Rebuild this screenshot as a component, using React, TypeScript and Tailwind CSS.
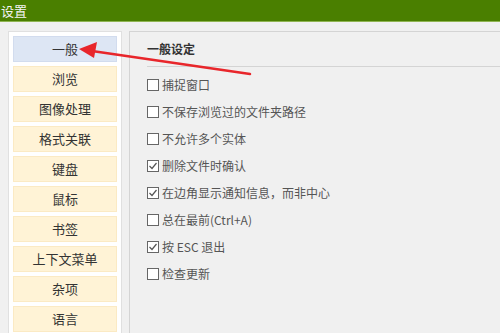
const navItems = [
  "一般",
  "浏览",
  "图像处理",
  "格式关联",
  "键盘",
  "鼠标",
  "书签",
  "上下文菜单",
  "杂项",
  "语言",
];

const options = [
  { label: "捕捉窗口", checked: false },
  { label: "不保存浏览过的文件夹路径", checked: false },
  { label: "不允许多个实体", checked: false },
  { label: "删除文件时确认", checked: true },
  { label: "在边角显示通知信息，而非中心", checked: true },
  { label: "总在最前(Ctrl+A)", checked: false },
  { label: "按 ESC 退出", checked: true },
  { label: "检查更新", checked: false },
];

const Checkbox = (props: { checked: boolean }) => (
  <div className="w-[12px] h-[12px] border border-[#666] bg-white flex items-center justify-center shrink-0">
    {props.checked && (
      <svg width="10" height="10" viewBox="0 0 10 10">
        <path d="M1.5 5 L4 7.5 L8.5 2" stroke="#555" strokeWidth="1.2" fill="none" />
      </svg>
    )}
  </div>
);

export default function App() {
  return (
    <div
      className="relative w-[500px] h-[333px] overflow-hidden bg-[#f0f0f0] flex flex-col"
      style={{ fontFamily: '"Noto Sans CJK SC", "Noto Sans", sans-serif' }}
    >
      <div className="h-[22px] bg-[#4a7f00] border-b border-[#8fb552] text-[#f4f4f4] text-[13px] leading-[21px] pl-[1px] shrink-0">
        设置
      </div>

      <div className="flex flex-1 pt-[9px] pl-[8px]">
        <div className="w-[114px] bg-white border border-[#e0e0e0] border-b-0 pt-[4px] px-[4px] flex flex-col gap-[4px]">
          {navItems.map((item, i) => (
            <div
              key={item}
              className={
                i === 0
                  ? "h-[26px] shrink-0 bg-[#dde6f4] border border-[#d2dcee] flex items-center justify-center text-[13px] text-[#333]"
                  : "h-[26px] shrink-0 bg-[#fff3d6] border border-[#fbeac4] flex items-center justify-center text-[13px] text-[#333]"
              }
            >
              {item}
            </div>
          ))}
        </div>

        <div className="flex-1 ml-[7px] border-t border-l border-[#d4d4d4] flex flex-col pl-[17px]">
          <div className="h-[35px] flex items-center text-[12px] font-bold text-[#333] border-b border-[#d4d4d4]">
            一般设定
          </div>
          <div className="flex flex-col pt-[12px] gap-[15px]">
            {options.map((o) => (
              <div key={o.label} className="h-[12px] flex items-center gap-[3px] text-[12px] text-[#555]">
                <Checkbox checked={o.checked} />
                <span className="leading-[12px]">{o.label}</span>
              </div>
            ))}
          </div>
        </div>
      </div>

      <svg className="absolute left-0 top-0 pointer-events-none" width="500" height="333">
        <line x1="250" y1="74" x2="92" y2="51" stroke="#e8262b" strokeWidth="2.5" strokeLinecap="round" />
        <polygon points="79,49 97,42 94,58" fill="#e8262b" />
      </svg>
    </div>
  );
}
